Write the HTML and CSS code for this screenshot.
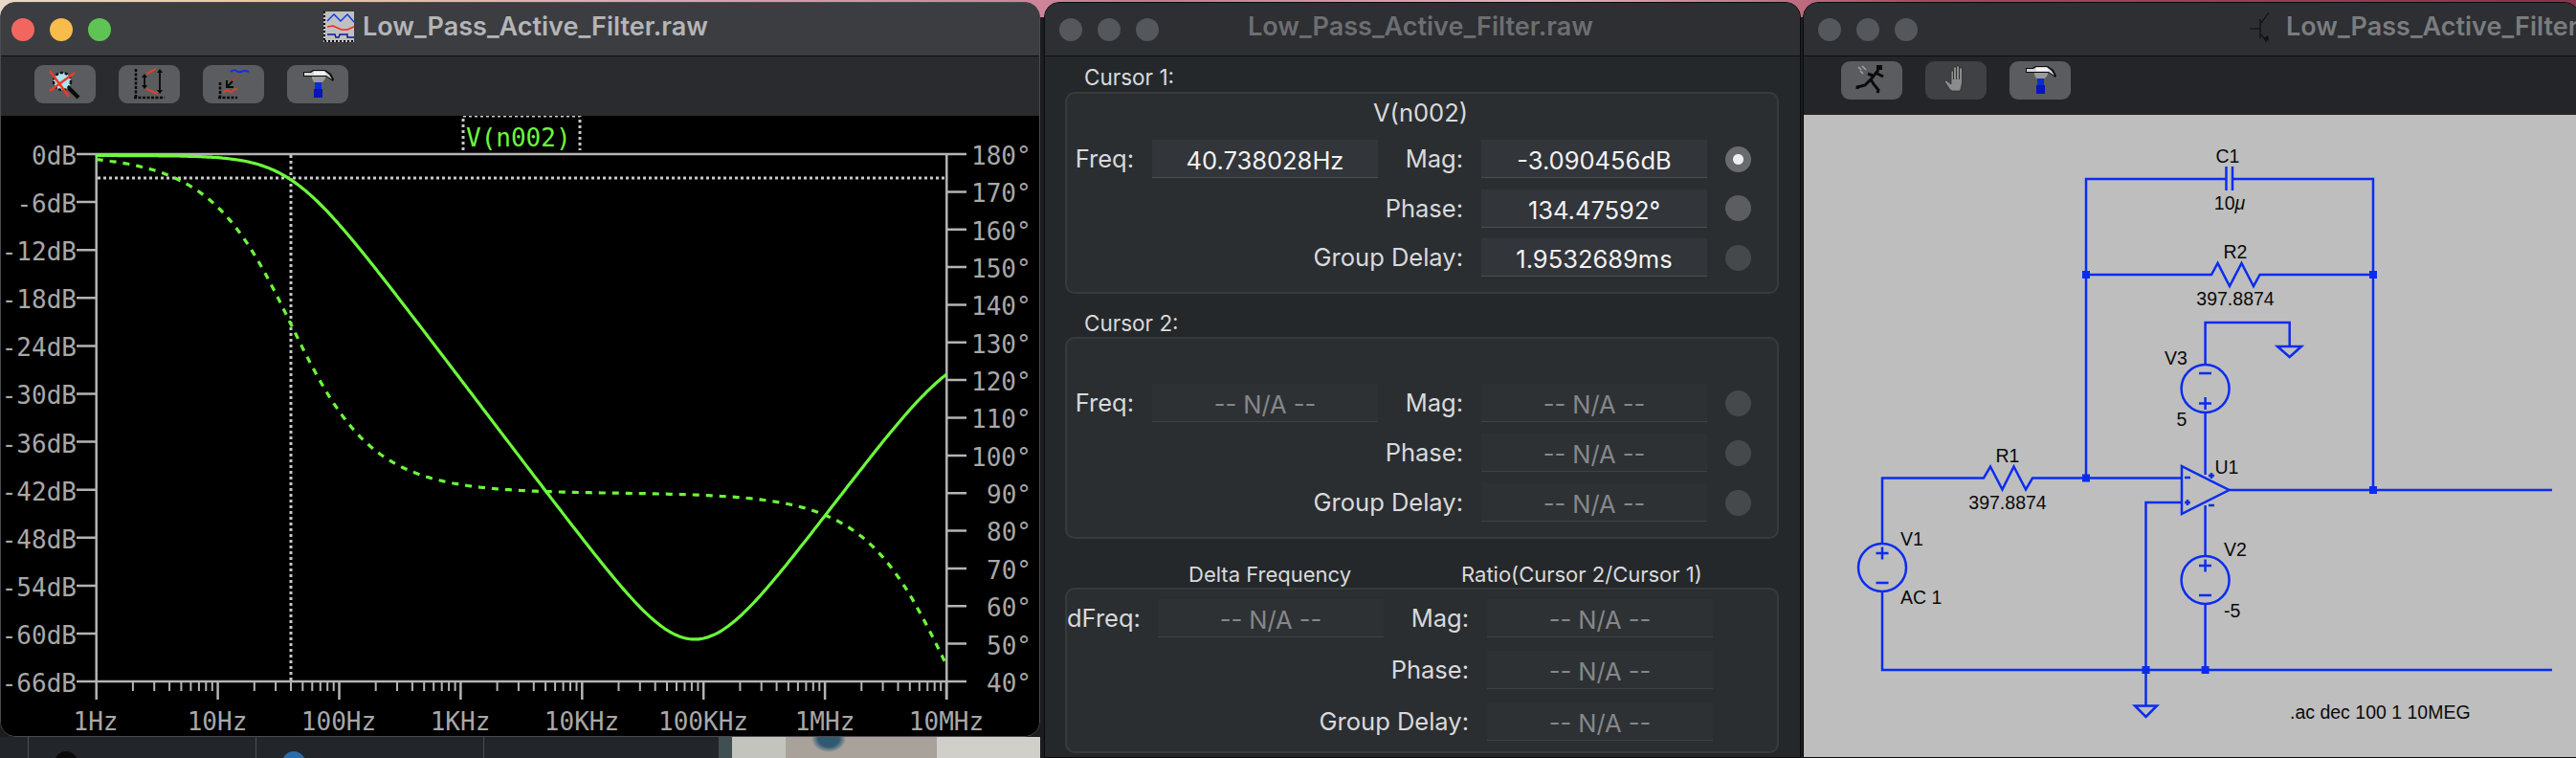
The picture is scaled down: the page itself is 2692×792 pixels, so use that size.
FILE: index.html
```html
<!DOCTYPE html>
<html lang="en">
<head>
<meta charset="utf-8">
<title>Low_Pass_Active_Filter.raw</title>
<link rel="stylesheet" href="styles.css">
</head>
<body>
<svg class="defs" width="0" height="0" aria-hidden="true">
  <defs>
    <symbol id="i-hammer" viewBox="0 0 64 40">
      <path d="M17 7h7l3-2h13l6 4 3 6-1 2-7-5H17z" fill="#0c0c0c"/>
      <path d="M18 8h7l3-2h11l5 4 3 5-6-4H18z" fill="#d4d4d4"/>
      <path d="M28 7h11l2 3H28z" fill="#f4f4f4"/>
      <path d="M26 12h14v2l-3 4H28l-2-4z" fill="#9a9a9a"/>
      <rect x="29" y="18" width="7" height="8" fill="#0a2bd8"/>
      <rect x="28" y="25" width="9" height="9" fill="#0616b8"/>
    </symbol>
  </defs>
</svg>

<div class="col-plot">
  <section class="win win-plot">
    <header class="titlebar bar-active">
      <div class="lights">
        <i class="light red"></i><i class="light amber"></i><i class="light green"></i>
      </div>
      <div class="title title-active">
        <svg class="doc-icon" viewBox="0 0 32 32">
          <rect width="32" height="32" fill="#c0c0c0"/>
          <path d="M1 0v32M1 31h31" stroke="#000" stroke-width="2" stroke-dasharray="2 2" fill="none"/>
          <path d="M4 10l7-7 7 7 7-7 7 8" stroke="#0a30f0" stroke-width="1.3" fill="none"/>
          <path d="M4 16l6-1 9 4 6 0 7-3" stroke="#f02a20" stroke-width="1.5" fill="none"/>
          <path d="M4 24h8l1 3h3l1-3h8v3h7" stroke="#0a1a90" stroke-width="1.5" fill="none"/>
        </svg>
        <span>Low_Pass_Active_Filter.raw</span>
      </div>
    </header>
    <div class="toolbar toolbar-plot">
      <button class="tool" type="button" aria-label="Unzoom">
        <svg viewBox="0 0 64 40">
          <circle cx="29" cy="17" r="9" fill="#a8e6ee" stroke="#111" stroke-width="2.5" stroke-dasharray="3 2"/>
          <path d="M36 24l10 10" stroke="#0a0a0a" stroke-width="4"/>
          <path d="M16 6l20 27M42 8L16 27" stroke="#ee3a2c" stroke-width="2.6"/>
        </svg>
      </button>
      <button class="tool" type="button" aria-label="Autorange">
        <svg viewBox="0 0 64 40">
          <path d="M18 4v30M16 34h32" stroke="#0a0a0a" stroke-width="2.5" stroke-dasharray="3 1.5" fill="none"/>
          <path d="M29 9l10-5M29 25l12 5" stroke="#d8442c" stroke-width="2" fill="none"/>
          <path d="M27 11v12M43 6v22" stroke="#0a0a0a" stroke-width="1.8"/>
          <path d="M24 13l3-4 3 4zM24 21l3 4 3-4zM40 8l3-4 3 4zM40 26l3 4 3-4z" fill="#0a0a0a"/>
        </svg>
      </button>
      <button class="tool" type="button" aria-label="Zoom to curves">
        <svg viewBox="0 0 64 40">
          <path d="M18 18v16M16 34h20" stroke="#0a0a0a" stroke-width="2.5" stroke-dasharray="3 1.5" fill="none"/>
          <path d="M21 29q3-4 6-2t4 0 5-2" stroke="#d8442c" stroke-width="2" fill="none"/>
          <path d="M29 7q3-3 6-1t5 1 4-1 4 1" stroke="#1030e0" stroke-width="2" fill="none"/>
          <path d="M36 12l-5 5" stroke="#b84030" stroke-width="1.5"/>
          <path d="M31 17l-5 5" stroke="#0a0a0a" stroke-width="2"/>
          <path d="M25 16v7h7" stroke="#0a0a0a" stroke-width="2" fill="none"/>
        </svg>
      </button>
      <button class="tool" type="button" aria-label="Settings">
        <svg><use href="#i-hammer"/></svg>
      </button>
    </div>
    <div class="plot">
      <svg class="plot-svg" viewBox="1 121 1085 648" preserveAspectRatio="none">
        <defs>
          <g id="decade">
            <path d="M38.2 712v10M60.5 712v10M76.4 712v10M88.7 712v10M98.7 712v10M107.2 712v10M114.6 712v10M121.1 712v10" stroke="#b4b4b4" stroke-width="2"/>
            <path d="M126.9 712v19" stroke="#b4b4b4" stroke-width="2.5"/>
          </g>
        </defs>
        <path class="axis" d="M80 161H1010M80 712H1010M100.7 161V731M989.3 161V731"/>
        <path class="axis" d="M80 211.1h20M80 261.2h20M80 311.3h20M80 361.4h20M80 411.5h20M80 461.6h20M80 511.7h20M80 561.8h20M80 611.9h20M80 662h20"/>
        <path class="axis" d="M989 200.4h21M989 239.7h21M989 279.1h21M989 318.4h21M989 357.8h21M989 397.1h21M989 436.5h21M989 475.9h21M989 515.2h21M989 554.6h21M989 593.9h21M989 633.3h21M989 672.6h21"/>
        <use href="#decade" x="100.7"/><use href="#decade" x="227.6"/><use href="#decade" x="354.5"/><use href="#decade" x="481.4"/><use href="#decade" x="608.3"/><use href="#decade" x="735.2"/><use href="#decade" x="862.1"/>
        <path class="cursor-line" d="M304 162V712M102 186H988"/>
        <path class="trace-box" d="M484 157V121H606V157"/>
        <text class="trace-name" x="487" y="153">V(n002)</text>
        <polyline id="phase-trace" class="trace trace-dash" points=""/>
        <polyline id="mag-trace" class="trace" points=""/>
        <g class="tick-l">
          <text x="80" y="172">0dB</text><text x="80" y="222">-6dB</text><text x="80" y="272">-12dB</text><text x="80" y="322">-18dB</text><text x="80" y="372">-24dB</text><text x="80" y="422">-30dB</text><text x="80" y="473">-36dB</text><text x="80" y="523">-42dB</text><text x="80" y="573">-48dB</text><text x="80" y="623">-54dB</text><text x="80" y="673">-60dB</text><text x="80" y="723">-66dB</text>
        </g>
        <g class="tick-r">
          <text x="1015" y="172">180°</text><text x="1015" y="211">170°</text><text x="1015" y="251">160°</text><text x="1015" y="290">150°</text><text x="1015" y="329">140°</text><text x="1015" y="369">130°</text><text x="1015" y="408">120°</text><text x="1015" y="447">110°</text><text x="1015" y="487">100°</text><text x="1031" y="526">90°</text><text x="1031" y="565">80°</text><text x="1031" y="605">70°</text><text x="1031" y="644">60°</text><text x="1031" y="684">50°</text><text x="1031" y="723">40°</text>
        </g>
        <g class="tick-x">
          <text x="100" y="763">1Hz</text><text x="227" y="763">10Hz</text><text x="354" y="763">100Hz</text><text x="481" y="763">1KHz</text><text x="608" y="763">10KHz</text><text x="735" y="763">100KHz</text><text x="862" y="763">1MHz</text><text x="989" y="763">10MHz</text>
        </g>
      </svg>
    </div>
  </section>
  <div class="under">
    <div class="shelf shelf-a"></div>
    <div class="shelf shelf-b"><i class="dot dot-black"></i></div>
    <div class="shelf shelf-c"><i class="dot dot-blue"></i></div>
    <div class="shelf shelf-d"></div>
    <div class="photo"></div>
  </div>
</div>

<section class="win win-cursors">
  <header class="titlebar bar-idle">
    <div class="lights lights-idle">
      <i class="light"></i><i class="light"></i><i class="light"></i>
    </div>
    <div class="title title-idle"><span>Low_Pass_Active_Filter.raw</span></div>
  </header>
  <div class="cursor-body">
    <h2 class="sec-label">Cursor 1:</h2>
    <div class="box box-one">
      <div class="trace-title">V(n002)</div>
      <div class="grid grid-one">
        <label class="lab">Freq:</label><output class="field">40.738028Hz</output>
        <label class="lab">Mag:</label><output class="field">-3.090456dB</output>
        <i class="radio radio-on"></i>
        <label class="lab lab-skip">Phase:</label><output class="field">134.47592°</output>
        <i class="radio radio-mid"></i>
        <label class="lab lab-skip">Group Delay:</label><output class="field">1.9532689ms</output>
        <i class="radio radio-off"></i>
      </div>
    </div>
    <h2 class="sec-label sec-two">Cursor 2:</h2>
    <div class="box box-two">
      <div class="grid grid-two">
        <label class="lab">Freq:</label><output class="field na">-- N/A --</output>
        <label class="lab">Mag:</label><output class="field na">-- N/A --</output>
        <i class="radio radio-off"></i>
        <label class="lab lab-skip">Phase:</label><output class="field na">-- N/A --</output>
        <i class="radio radio-off"></i>
        <label class="lab lab-skip">Group Delay:</label><output class="field na">-- N/A --</output>
        <i class="radio radio-off"></i>
      </div>
    </div>
    <div class="delta-heads">
      <span class="head-delta">Delta Frequency</span>
      <span class="head-ratio">Ratio(Cursor 2/Cursor 1)</span>
    </div>
    <div class="box box-three">
      <div class="grid grid-three">
        <label class="lab">dFreq:</label><output class="field na">-- N/A --</output>
        <label class="lab">Mag:</label><output class="field na">-- N/A --</output>
        <label class="lab lab-skip">Phase:</label><output class="field na">-- N/A --</output>
        <label class="lab lab-skip">Group Delay:</label><output class="field na">-- N/A --</output>
      </div>
    </div>
  </div>
</section>

<section class="win win-schem">
  <header class="titlebar bar-idle">
    <div class="lights lights-idle lights-schem">
      <i class="light"></i><i class="light"></i><i class="light"></i>
    </div>
    <div class="title title-idle title-schem">
      <svg class="bjt-icon" viewBox="0 0 22 32">
        <path d="M0 18h11M11 8v20M12 12l8-11M12 24l8 11" stroke="#0e0e0e" stroke-width="1.2" fill="none"/>
        <path d="M20 31l-1-6-4 3z" fill="#0e0e0e"/>
      </svg>
      <span>Low_Pass_Active_Filter.raw</span>
    </div>
  </header>
  <div class="toolbar toolbar-schem">
    <button class="tool" type="button" aria-label="Run">
      <svg viewBox="0 0 64 40">
        <path d="M18 6l3 3M22 5l4 4M20 10l3 3" stroke="#a0a0a0" stroke-width="1.6"/>
        <rect x="37" y="4" width="6" height="5" fill="#0a0a0a"/>
        <path d="M39 9l-8 10 3 5 5 6-1 3M31 19l-6 6-8 2v2M36 12l8 4M33 15l-5-2" stroke="#0a0a0a" stroke-width="3" fill="none"/>
      </svg>
    </button>
    <button class="tool tool-off" type="button" aria-label="Halt">
      <svg viewBox="0 0 64 40">
        <path d="M26 30l-6-9 2-1 5 4V10h2.500v9V6h3v13V5h3v14V7h3v14 2l-2 8h-8z" fill="#8c8c8c" stroke="#2a2a2a" stroke-width=".7"/>
      </svg>
    </button>
    <button class="tool" type="button" aria-label="Settings">
      <svg><use href="#i-hammer"/></svg>
    </button>
  </div>
  <div class="schem">
    <svg class="schem-svg" viewBox="1885 120 810 671" preserveAspectRatio="none">
      <g class="wire">
        <path d="M2180 499.500V187H2326M2333 187H2480V512"/>
        <path d="M2326.500 174V199M2333 174V199"/>
        <path d="M2180 287H2311L2317.600 275 2330 299 2342.500 275 2355 299 2361.600 287H2480"/>
        <path d="M2304.600 381V337H2392.700V362"/>
        <path d="M2380 362H2405L2392.700 373Z"/>
        <circle cx="2304.600" cy="406" r="25"/>
        <path d="M2298 390h13M2298 421.500h13M2304.600 415v13"/>
        <path d="M2304.600 431V496"/>
        <path d="M1967 568V499.500H2073L2080 487.500 2092.500 511.500 2104.500 487.500 2117 511.500 2124 499.500H2280"/>
        <path d="M2280 487L2329.500 512 2280 537Z"/>
        <path d="M2329.500 512H2667"/>
        <path d="M2283 499h6M2283 525h6M2286 522v6M2308 497h6M2311 494v6M2308 528h6"/>
        <path d="M2280 525H2242.500V737"/>
        <path d="M2231 737.500H2254L2242.500 749Z"/>
        <path d="M1967 618V700H2667"/>
        <circle cx="1967" cy="593" r="25"/>
        <path d="M1960.500 578h13M1967 571.500v13M1960.500 609h13"/>
        <path d="M2304.600 528V581"/>
        <circle cx="2304.600" cy="606" r="25"/>
        <path d="M2298 591h13M2304.600 584.500v13M2298 622h13"/>
        <path d="M2304.600 631V700"/>
      </g>
      <g class="node">
        <rect x="2176" y="283" width="8" height="8"/><rect x="2476" y="283" width="8" height="8"/>
        <rect x="2176" y="495.500" width="8" height="8"/><rect x="2476" y="508" width="8" height="8"/>
        <rect x="2238.500" y="696" width="8" height="8"/><rect x="2300.600" y="696" width="8" height="8"/>
      </g>
      <g class="lbl">
        <text x="2328" y="170" class="mid">C1</text>
        <text x="2330" y="219" class="mid">10<tspan class="mu">μ</tspan></text>
        <text x="2336" y="270" class="mid">R2</text>
        <text x="2336" y="319" class="mid">397.8874</text>
        <text x="2274" y="381" class="mid">V3</text>
        <text x="2280" y="445" class="mid">5</text>
        <text x="2098" y="483" class="mid">R1</text>
        <text x="2098" y="532" class="mid">397.8874</text>
        <text x="2327" y="495" class="mid">U1</text>
        <text x="1986" y="570">V1</text>
        <text x="1986" y="631">AC 1</text>
        <text x="2324" y="581">V2</text>
        <text x="2324" y="645">-5</text>
        <text x="2393" y="751">.ac dec 100 1 10MEG</text>
      </g>
    </svg>
  </div>
</section>
<script src="plot.js"></script>
</body>
</html>
```

FILE: styles.css
```css
* { box-sizing: border-box; }
html, body { margin: 0; padding: 0; }
body {
  width: 2692px;
  height: 792px;
  overflow: hidden;
  display: flex;
  align-items: flex-start;
  padding-top: 2px;
  font-family: Inter, "Liberation Sans", sans-serif;
  background:
    linear-gradient(90deg, #e8d8c8 0%, #e9c9a0 10%, #d9a8b8 25%, #c87a92 45%, #e2b4c0 60%, #a8485e 75%, #8a3450 100%) top / 100% 18px no-repeat,
    #1b1c1f;
}
.defs { position: absolute; }

/* windows */
.win {
  background: #25282b;
  border: 1px solid #0c0c0c;
  border-radius: 16px 16px 0 0;
  overflow: hidden;
  display: flex;
  flex-direction: column;
  box-shadow: inset 0 1px 0 #5d5d60;
}
.col-plot { width: 1087px; flex: none; display: flex; flex-direction: column; height: 790px; }
.win-plot { height: 768px; border-radius: 16px; border-color: #4a4b4d; background: #000; flex: none; }
.win-cursors { width: 791px; height: 790px; margin-left: 4px; flex: none; }
.win-schem { width: 812px; height: 790px; margin-left: 2px; flex: none; }

/* title bars */
.titlebar {
  height: 56px;
  flex: none;
  display: flex;
  align-items: center;
  position: relative;
  border-bottom: 1px solid #0e0e0e;
}
.bar-active { background: #3c3d40; }
.bar-idle { background: #2d2f33; }
.lights { display: flex; gap: 16px; padding-left: 11px; }
.lights-idle { padding-left: 15px; }
.lights-schem { padding-left: 15px; }
.light { display: block; width: 24px; height: 24px; border-radius: 50%; background: #54575b; }
.red { background: #f1675f; }
.amber { background: #f7bc4b; }
.green { background: #5fc454; }
.title {
  position: absolute;
  top: 9px;
  display: flex;
  align-items: center;
  gap: 9px;
  font-size: 27px;
  font-weight: 600;
  white-space: nowrap;
  line-height: 32px;
}
.title-active { left: 337px; color: #b4b5b7; }
.title-idle { left: 212px; color: #6c6e71; }
.title-schem { left: 466px; color: #7a7c7f; }
.doc-icon { width: 32px; height: 32px; }
.bjt-icon { width: 22px; height: 32px; margin-right: 7px; }

/* toolbars */
.toolbar { flex: none; display: flex; background: #2a2b2e; }
.toolbar-plot { height: 62px; padding: 9px 0 0 35px; gap: 24px; }
.toolbar-schem { height: 61px; padding: 5px 0 0 39px; gap: 24px; background: #242528; }
.tool {
  width: 64px;
  height: 40px;
  padding: 0;
  border: 0;
  border-radius: 9px;
  background: #5b5c5f;
}
.tool svg { display: block; width: 64px; height: 40px; }
.tool-off { background: #404144; }

/* plot */
.plot { flex: 1; background: #000; }
.plot-svg { display: block; width: 1085px; height: 648px; }
.axis { stroke: #b4b4b4; stroke-width: 2.5; fill: none; }
.cursor-line { stroke: #c8c8c8; stroke-width: 3; stroke-dasharray: 3 3; fill: none; }
.trace-box { stroke: #c8c8c8; stroke-width: 3; stroke-dasharray: 3 3; fill: none; }
.trace { fill: none; stroke: #6df93c; stroke-width: 3.2; stroke-linejoin: round; }
.trace-dash { stroke-dasharray: 7 7; }
.trace-name { font: 26px "DejaVu Sans Mono", monospace; fill: #6df93c; }
.tick-l text, .tick-r text, .tick-x text { font: 26px "DejaVu Sans Mono", monospace; fill: #a8a8a8; }
.tick-l text { text-anchor: end; }
.tick-x text { text-anchor: middle; }

/* beneath the plot window */
.under { height: 22px; display: flex; background: #22262a; overflow: hidden; }
.shelf { height: 22px; border-left: 1px solid #4a4d50; display: flex; justify-content: center; }
.shelf-a { width: 29px; border-left: 0; }
.shelf-b { width: 238px; }
.shelf-c { width: 238px; }
.shelf-d { width: 246px; }
.dot { display: block; width: 24px; height: 24px; margin-top: 15px; border-radius: 50%; margin-right: 150px; }
.dot-black { background: #0a0a0a; margin-right: 159px; }
.dot-blue { background: #2a6ca8; margin-right: 159px; }
.photo {
  flex: 1;
  background:
    radial-gradient(ellipse 18px 14px at 115px 2px, #2f5a72 0 60%, transparent 100%),
    linear-gradient(90deg, #3f4f52 0 14px, #c4c4be 14px 70px, #a9a29a 70px 228px, #d0cfca 228px 100%);
}

/* cursor panel */
.cursor-body { flex: 1; padding: 0 21px; background: #25282b; color: #d9dadb; }
.sec-label { margin: 0; padding: 9px 0 0 20px; height: 37px; line-height: 26px; font-size: 22.500px; font-weight: 400; }
.sec-two { padding-top: 18px; height: 45px; }
.box {
  width: 746px;
  border: 2px solid #383b3e;
  border-radius: 10px;
  background: #2b2e31;
}
.box-one { height: 211px; }
.box-two { height: 211px; padding-top: 47px; }
.box-three { height: 173px; padding-top: 10px; }
.trace-title { height: 48px; text-align: center; line-height: 40px; font-size: 25.500px; color: #d9dadb; padding-right: 3px; }
.grid { display: grid; align-items: center; }
.grid-one { grid-template-columns: 89px 236px 108px 236px 75px; row-gap: 11.500px; }
.grid-two { grid-template-columns: 89px 236px 108px 236px 75px; row-gap: 12px; }
.grid-three { grid-template-columns: 95px 236px 108px 236px; row-gap: 14px; }
.lab { text-align: right; padding-right: 19px; font-size: 25.500px; color: #d9dadb; line-height: 40px; white-space: nowrap; }
.lab-skip { grid-column: 1 / 4; }
.field {
  display: block;
  height: 40px;
  line-height: 44px;
  text-align: center;
  font-size: 25.500px;
  color: #f2f2f2;
  background: #32353a;
  border-bottom: 1px solid #4a4d50;
  white-space: nowrap;
}
.na { color: #85878a; background: #2e3134; border-bottom-color: #3f4245; }
.radio { display: block; width: 27px; height: 27px; margin-left: 19px; border-radius: 50%; }
.radio-on { background: radial-gradient(circle, #eeeeee 0 5px, #6a6b6e 6px); }
.radio-mid { background: #5b5d60; }
.radio-off { background: #46494c; }

.delta-heads { position: relative; height: 51px; font-size: 22px; line-height: 26px; }
.head-delta, .head-ratio { position: absolute; top: 24px; white-space: nowrap; }
.head-delta { left: 129px; }
.head-ratio { left: 414px; }

/* schematic */
.schem { flex: 1; background: #bebebe; }
.schem-svg { display: block; width: 100%; height: 100%; }
.wire { fill: none; stroke: #0b2cf0; stroke-width: 2.500; }
.node { fill: #0b2cf0; }
.lbl text { font: 19.500px "Liberation Sans", Arial, sans-serif; fill: #0a0a0a; }
.lbl .mid { text-anchor: middle; }
.mu { font-style: italic; }
```

FILE: plot.js
```js
// Bode response of the filter: magnitude and phase of V(n002) against log frequency.
(function () {
  var X0 = 100.7, DECADE = 126.9;
  var fc = 39.8, fz = 1.8e8, f2 = 1.2e7, f1 = 9.8e6;
  var deg = 180 / Math.PI;
  var mag = [], phase = [];
  for (var d = 0; d <= 7.0001; d += 0.02) {
    var f = Math.pow(10, d);
    var a = 1 / Math.sqrt(1 + (f / fc) * (f / fc));
    var b = (f / fz) / Math.sqrt(1 + (f / f2) * (f / f2));
    var db = 20 * Math.log10(a + b);
    var ph = 180 - Math.atan(f / fc) * deg - Math.atan(f / f1) * deg;
    var x = (X0 + DECADE * d).toFixed(1);
    mag.push(x + "," + (161 + 1.5 + -db * 8.35).toFixed(1));
    phase.push(x + "," + (161 + (180 - ph) * 3.936).toFixed(1));
  }
  document.getElementById("mag-trace").setAttribute("points", mag.join(" "));
  document.getElementById("phase-trace").setAttribute("points", phase.join(" "));
})();
```
